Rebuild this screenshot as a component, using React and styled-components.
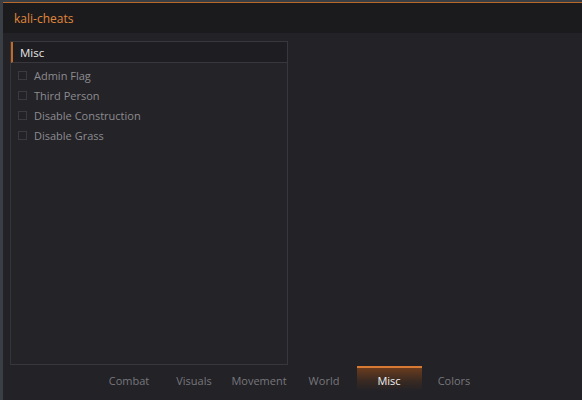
import styled, { createGlobalStyle } from 'styled-components';

const GlobalStyle = createGlobalStyle`
    html, body {
        margin: 0;
        padding: 0;
        background: #3a3e45;
        height: 100%;
        overflow: hidden;
    }
    #root {
        height: 100%;
    }
`

const features = ['Admin Flag', 'Third Person', 'Disable Construction', 'Disable Grass'];
const tabs = ['Combat', 'Visuals', 'Movement', 'World', 'Misc', 'Colors'];

const App = () => {
    return (
        <>
            <GlobalStyle />
            <Window>
                <TitleBar>kali-cheats</TitleBar>
                <Body>
                    <GroupBox>
                        <GroupHeader>Misc</GroupHeader>
                        <OptionList>
                            {features.map(name => (
                                <Option key={name}>
                                    <CheckBox />
                                    <span>{name}</span>
                                </Option>
                            ))}
                        </OptionList>
                    </GroupBox>
                </Body>
                <TabBar>
                    {tabs.map(tab => (
                        <Tab key={tab} active={tab === 'Misc'}>{tab}</Tab>
                    ))}
                </TabBar>
            </Window>
        </>
    )
}

export default App

const Window = styled.div`
    margin: 2px 0 0 3px;
    height: calc(100% - 2px);
    border-top: 1px solid #b8692c;
    background: #232227;
    display: flex;
    flex-direction: column;
    font-family: "Open Sans", "Liberation Sans", sans-serif;
`
const TitleBar = styled.div`
    height: 30px;
    background: #1b1b1e;
    color: #e0873a;
    font-size: 12px;
    padding-left: 11px;
    display: flex;
    align-items: center;
    flex-shrink: 0;
`
const Body = styled.div`
    padding: 8px 0 0 7px;
`
const GroupBox = styled.div`
    width: 276px;
    height: 322px;
    border: 1px solid #38373d;
    border-left-color: #343339;
    background: #242328;
`
const GroupHeader = styled.div`
    height: 20px;
    background: #1e1d21;
    border-left: 2px solid #c06a28;
    border-bottom: 1px solid #38373d;
    color: #e6e6e6;
    font-size: 11.5px;
    padding-left: 7px;
    display: flex;
    align-items: center;
`
const OptionList = styled.div`
    display: flex;
    flex-direction: column;
    padding: 2px 0 0 7px;
`
const Option = styled.label`
    height: 20px;
    display: flex;
    align-items: center;
    gap: 7px;
    color: #8c8c90;
    font-size: 11px;
`
const CheckBox = styled.span`
    width: 7px;
    height: 7px;
    border: 1px solid #3b3a40;
    background: #232227;
`
const TabBar = styled.div`
    display: flex;
    justify-content: center;
    padding-top: 1px;
    margin-left: -2px;
`
const Tab = styled.div`
    width: 65px;
    height: 22px;
    display: flex;
    align-items: center;
    justify-content: center;
    padding-top: 1px;
    font-size: 11px;
    color: ${p => p.active ? '#f0f0f0' : '#77777c'};
    border-top: 2px solid ${p => p.active ? '#d77a34' : 'transparent'};
    background: ${p => p.active
        ? 'linear-gradient(to bottom, #6a3c1e 0%, #3a2a22 55%, #232227 100%)'
        : 'transparent'};
`
